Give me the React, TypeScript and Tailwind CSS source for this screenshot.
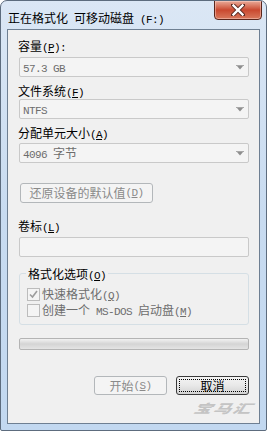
import React from "react";

const CJK = "font-['Noto_Sans_CJK_SC',sans-serif] text-[12px]";
const MONO = "font-['Liberation_Mono',monospace] text-[11px] tracking-[-0.6px]";

function Txt({ s }: { s: string }) {
  const runs = s.match(/[\x20-\x7e]+|[^\x20-\x7e]+/g) || [];
  return (
    <>
      {runs.map((r, i) => {
        const ascii = /^[\x20-\x7e]+$/.test(r);
        if (!ascii) {
          return (
            <span key={i} className={CJK}>
              {r}
            </span>
          );
        }
        const pieces: React.ReactNode[] = [];
        let buf = "";
        for (let k = 0; k < r.length; k++) {
          if (r[k] === "&" && k + 1 < r.length) {
            if (buf) pieces.push(buf);
            buf = "";
            pieces.push(
              <span key={k} className="underline underline-offset-[1px]">
                {r[k + 1]}
              </span>
            );
            k++;
          } else buf += r[k];
        }
        if (buf) pieces.push(buf);
        return (
          <span key={i} className={`${MONO} whitespace-pre`}>
            {pieces}
          </span>
        );
      })}
    </>
  );
}

function Label({ s, className = "" }: { s: string; className?: string }) {
  return (
    <div className={`h-[12px] leading-[12px] text-black whitespace-nowrap ${className}`}>
      <Txt s={s} />
    </div>
  );
}

function Combo({ s, className = "" }: { s: string; className?: string }) {
  return (
    <div
      className={`h-[20px] w-[230px] border border-[#c9c9c9] rounded-[2px] bg-[#f4f4f4] flex items-center pl-[3px] pr-[4px] text-[#6d6d6d] leading-[12px] ${className}`}
    >
      <div className="flex-1 whitespace-nowrap">
        <Txt s={s} />
      </div>
      <svg width="8" height="5" viewBox="0 0 8 5">
        <rect x="0" y="0" width="8" height="1" fill="#a8a8a8" />
        <polygon points="1,1 7,1 4,4.5" fill="#8e8e8e" />
      </svg>
    </div>
  );
}

function Check({ checked }: { checked?: boolean }) {
  return (
    <div className="w-[13px] h-[13px] border border-[#bcbcbc] bg-[#f4f4f4] flex items-center justify-center shrink-0">
      {checked && (
        <svg width="9" height="9" viewBox="0 0 9 9">
          <path d="M1 4.5 L3.5 7 L8 1" stroke="#9c9c9c" strokeWidth="1.6" fill="none" />
        </svg>
      )}
    </div>
  );
}

export default function App() {
  return (
    <div className="w-[267px] h-[431px] bg-white">
      <div className="relative w-[267px] h-[431px] border border-[#5d6c7e] rounded-t-[7px] rounded-b-[2px] bg-gradient-to-b from-[#dbe7f5] via-[#c8dbf0] to-[#c2d8f0] flex flex-col overflow-hidden">
        {/* title bar */}
        <div className="h-[28px] shrink-0 pl-[7px] pt-[10px]">
          <div className="h-[12px] leading-[12px] text-black whitespace-nowrap">
            <Txt s="正在格式化 可移动磁盘 (F:)" />
          </div>
        </div>
        {/* close button */}
        <div className="absolute top-[-1px] right-[4px] w-[48px] h-[20px] border border-[#5a261c] rounded-b-[4px] bg-gradient-to-b from-[#e8aa98] via-[#c9482f] to-[#d8785c] flex items-center justify-center shadow-[inset_0_0_0_1px_rgba(255,220,210,0.45)]">
          <svg width="14" height="12" viewBox="0 0 14 12">
            <path d="M2 1 L12 11 M12 1 L2 11" stroke="#5a2a22" strokeWidth="4.2" strokeLinecap="square" />
            <path d="M2.5 1.5 L11.5 10.5 M11.5 1.5 L2.5 10.5" stroke="#ffffff" strokeWidth="2.4" strokeLinecap="square" />
          </svg>
        </div>

        {/* client area */}
        <div className="flex-1 mx-[6px] mb-[6px] border border-[#6e7f92] bg-[#f0f0f0] flex flex-col pl-[11px] pr-[9px]">
          <Label s="容量(&P):" className="mt-[9px] -ml-[1px]" />
          <Combo s="57.3 GB" className="mt-[6px]" />
          <Label s="文件系统(&F)" className="mt-[7px] -ml-[1px]" />
          <Combo s="NTFS" className="mt-[3px]" />
          <Label s="分配单元大小(&A)" className="mt-[7px] -ml-[1px]" />
          <Combo s="4096 字节" className="mt-[5px]" />

          <div className="mt-[20px] ml-[1px] w-[133px] h-[20px] border border-[#b3b7ba] rounded-[3px] bg-[#f4f4f4] flex items-center justify-center text-[#8a8a8a] leading-[12px] whitespace-nowrap">
            <Txt s="还原设备的默认值(&D)" />
          </div>

          <Label s="卷标(&L)" className="mt-[16px] -ml-[1px]" />
          <div className="mt-[6px] w-[230px] h-[20px] border border-[#c9c9c9] rounded-[2px] bg-[#f4f4f4]" />

          {/* group box */}
          <div className="relative mt-[16px] w-[230px] h-[52px] border border-[#d5dfe5] rounded-[3px] pt-[14px] pl-[7px] flex flex-col gap-[3px]">
            <div className="absolute -top-[7px] left-[6px] px-[2px] bg-[#f0f0f0] h-[12px] leading-[12px] text-black whitespace-nowrap">
              <Txt s="格式化选项(&O)" />
            </div>
            <div className="h-[13px] flex items-center gap-[2px] text-[#6d6d6d] leading-[12px] whitespace-nowrap">
              <Check checked />
              <span>
                <Txt s="快速格式化(&Q)" />
              </span>
            </div>
            <div className="h-[13px] flex items-center gap-[2px] text-[#6d6d6d] leading-[12px] whitespace-nowrap">
              <Check />
              <span>
                <Txt s="创建一个 MS-DOS 启动盘(&M)" />
              </span>
            </div>
          </div>

          {/* progress bar */}
          <div className="mt-[13px] w-[230px] h-[12px] border border-[#b4b4b4] rounded-[2px] bg-gradient-to-b from-[#f2f2f2] via-[#d4d4d4] to-[#e4e4e4]" />

          {/* buttons */}
          <div className="mt-[26px] flex justify-end gap-[9px] mr-[1px]">
            <div className="w-[73px] h-[19px] border border-[#b3b7ba] rounded-[3px] bg-[#f4f4f4] flex items-center justify-center text-[#8a8a8a] leading-[12px] whitespace-nowrap">
              <Txt s="开始(&S)" />
            </div>
            <div className="w-[73px] h-[19px] border border-[#3a3a3a] rounded-[3px] bg-gradient-to-b from-[#f4f4f4] via-[#e8e8e8] to-[#d3d3d3] p-[2px]">
              <div className="w-full h-full border border-dotted border-black flex items-center justify-center text-black leading-[12px]">
                <Txt s="取消" />
              </div>
            </div>
          </div>

          {/* watermark */}
          <div className="mt-[7px] -mr-[3px] flex justify-end">
            <span className="inline-block origin-right scale-x-150 -skew-x-12 font-['Noto_Sans_CJK_SC',sans-serif] text-[12px] leading-[11px] font-black italic tracking-[1px] text-[#c4c4c4]">
              宝马汇
            </span>
          </div>
        </div>
      </div>
    </div>
  );
}
